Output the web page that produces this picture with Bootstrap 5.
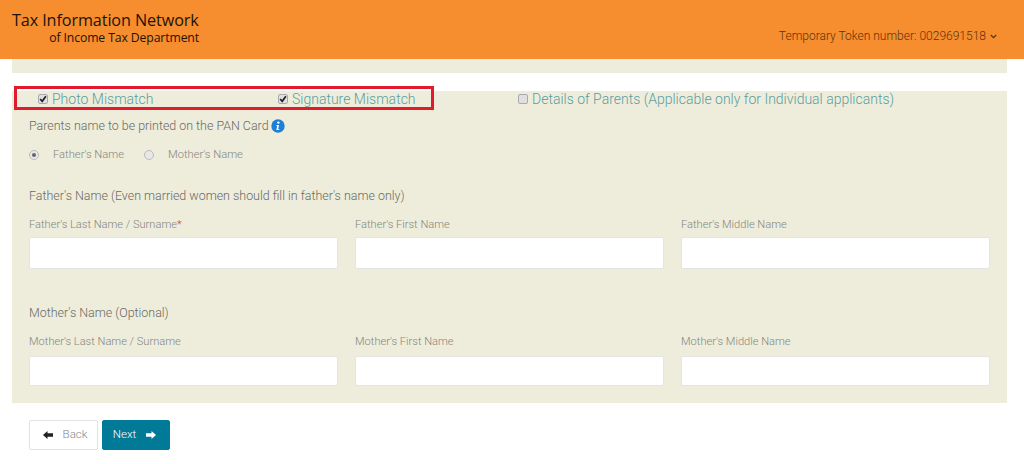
<!DOCTYPE html>
<html lang="en">
<head>
<meta charset="utf-8">
<title>Tax Information Network</title>
<link rel="stylesheet" href="https://cdn.jsdelivr.net/npm/bootstrap@5.3.0/dist/css/bootstrap.min.css">
<style>
html,body{height:464px;overflow:hidden}
body{background:#fff;font-family:Roboto,"Liberation Sans",sans-serif;font-weight:300;color:#555}
.top-bar{height:59px;background:#f68d2e;padding:0 27px 0 12px}
.brand-name{font-family:"Open Sans","Noto Sans",sans-serif;font-weight:400;color:#1d1408;width:187px;padding-top:10px}
.brand-one{font-size:16.2px;line-height:20px;letter-spacing:-.1px;white-space:nowrap}
.brand-two{font-size:12.2px;line-height:14px;margin-top:1px;font-weight:500;text-align:right;white-space:nowrap;letter-spacing:-.1px}
.token-text{font-size:12px;color:#5c3408;padding-top:28px;line-height:16px;align-self:flex-start}
.wrap-area{width:995px;margin-left:12px}
.strip-top{height:14px;background:#eeeddc}
.form-panel{background:#eeeddc;margin-top:18px;height:312px;padding:0 17px;position:relative}
.red-box{position:absolute;left:2px;top:-5px;width:420px;height:24px;border:3px solid #e21b2c;pointer-events:none}
.check-row{height:16px;font-size:14px;color:#5a9ea0;line-height:16px}
.check-item{display:flex;align-items:center;position:absolute;top:0}
.check-one{left:26px}.check-two{left:266px}.check-three{left:506px}
.box-mark{width:10px;height:10px;border-radius:2px;border:1px solid #aaa;background:#e0e0e0;margin-right:4px;display:flex;align-items:center;justify-content:center}
.head-text{font-size:12.45px;color:#6a6a62;line-height:16px}
.radio-row{font-size:11.2px;color:#85857c;line-height:14px;margin-top:14px}
.radio-mark{width:10px;height:10px;border-radius:50%;border:1px solid #bbb;background:#e8e8e8;display:flex;align-items:center;justify-content:center}
.radio-mark i{width:4px;height:4px;border-radius:50%;background:#666;display:block}
.field-grid{display:grid;grid-template-columns:repeat(3,309px);column-gap:17px}
.field-label{font-size:11.1px;color:#85857c;line-height:14px;margin-bottom:5px;display:block}
.field-box{height:32px;border:1px solid #e4e4e4;border-radius:2px;background:#fff;display:block;width:100%}
.mother-box{height:30px}
.mother-grid .field-label{margin-bottom:7px}
.req-star{color:#d33}
.act-row{margin:17px 0 0 17px}
.act-back,.act-next{height:30px;font-size:11.5px;border-radius:2px;display:flex;align-items:center;padding:0;--bs-btn-font-weight:300}
.act-back{width:69px;background:#fff;border:1px solid #e2e2e2;color:#8a8a8a;justify-content:center;gap:10px;padding-left:3px}
.act-next{width:68px;background:#007a96;border:1px solid #007a96;color:#fff;justify-content:center;gap:10px;padding-right:3px}
.check-gap{margin-top:11px}
.info-gap{gap:2px}
.radio-label-a{margin-left:14px;margin-right:20px}
.radio-label-b{margin-left:14px}
.father-head{margin-top:26px}
.father-grid{margin-top:14px}
.mother-head{margin-top:36px}
.mother-grid{margin-top:14px}
</style>
</head>
<body>
<header class="top-bar d-flex justify-content-between">
  <div class="brand-name">
    <div class="brand-one">Tax Information Network</div>
    <div class="brand-two">of Income Tax Department</div>
  </div>
  <div class="token-text d-flex align-items-center gap-1">Temporary Token number: 0029691518
    <svg width="7" height="5" viewBox="0 0 7 5"><path d="M.8 1l2.700 2.600L6.200 1" fill="none" stroke="#5c3408" stroke-width="1.200"/></svg>
  </div>
</header>
<main class="wrap-area">
  <div class="strip-top"></div>
  <section class="form-panel">
    <div class="check-row">
      <label class="check-item check-one"><span class="box-mark"><svg width="8" height="8" viewBox="0 0 7 7"><path d="M1 3.500l1.800 2L6 1" fill="none" stroke="#222" stroke-width="1.500"/></svg></span>Photo Mismatch</label>
      <label class="check-item check-two"><span class="box-mark"><svg width="8" height="8" viewBox="0 0 7 7"><path d="M1 3.500l1.800 2L6 1" fill="none" stroke="#222" stroke-width="1.500"/></svg></span>Signature Mismatch</label>
      <label class="check-item check-three"><span class="box-mark"></span>Details of Parents (Applicable only for Individual applicants)</label>
    </div>
    <div class="red-box"></div>
    <div class="head-text d-flex align-items-center info-gap check-gap">Parents name to be printed on the PAN Card
      <svg width="14" height="14" viewBox="0 0 14 14"><circle cx="7" cy="7" r="6.700" fill="#1f7fd6"/><circle cx="7.400" cy="3.600" r="1.200" fill="#fff"/><path d="M5.600 6h2.500l-.9 4h1v1H5.300l.9-4h-.8z" fill="#fff"/></svg>
    </div>
    <div class="radio-row d-flex align-items-center">
      <span class="radio-mark"><i></i></span><span class="radio-label-a">Father's Name</span>
      <span class="radio-mark"></span><span class="radio-label-b">Mother's Name</span>
    </div>
    <div class="head-text father-head">Father's Name (Even married women should fill in father's name only)</div>
    <div class="field-grid father-grid">
      <div><label class="field-label">Father's Last Name / Surname<span class="req-star">*</span></label><input class="field-box" type="text"></div>
      <div><label class="field-label">Father's First Name</label><input class="field-box" type="text"></div>
      <div><label class="field-label">Father's Middle Name</label><input class="field-box" type="text"></div>
    </div>
    <div class="head-text mother-head">Mother's Name (Optional)</div>
    <div class="field-grid mother-grid">
      <div><label class="field-label">Mother's Last Name / Surname</label><input class="field-box mother-box" type="text"></div>
      <div><label class="field-label">Mother's First Name</label><input class="field-box mother-box" type="text"></div>
      <div><label class="field-label">Mother's Middle Name</label><input class="field-box mother-box" type="text"></div>
    </div>
  </section>
  <div class="act-row d-flex gap-1">
    <button class="btn act-back" type="button"><svg width="10" height="8" viewBox="0 0 10 8"><path d="M0 4l4.500-4v2.200H10v3.600H4.500V8z" fill="#222"/></svg>Back</button>
    <button class="btn act-next" type="button">Next<svg width="10" height="8" viewBox="0 0 10 8"><path d="M10 4L5.500 0v2.200H0v3.600h5.500V8z" fill="#fff"/></svg></button>
  </div>
</main>
</body>
</html>
